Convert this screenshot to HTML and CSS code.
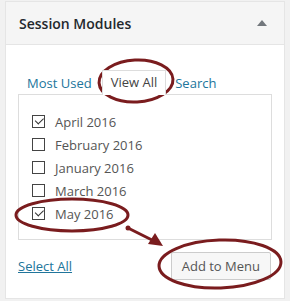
FILE: index.html
```html
<!DOCTYPE html>
<html lang="en">
<head>
    <meta charset="UTF-8">
    <title>Session Modules</title>
    <link rel="stylesheet" href="styles.css">
</head>
<body>
    <div class="postbox">
        <div class="postbox-header">
            <h2>Session Modules</h2>
            <span class="toggle-arrow"></span>
        </div>

        <div class="inside">
            <ul class="tabs">
                <li><a href="#">Most Used</a></li>
                <li class="active">View All</li>
                <li><a href="#">Search</a></li>
            </ul>

            <div class="tab-panel">
                <label class="item"><span class="check checked"></span>April 2016</label>
                <label class="item"><span class="check"></span>February 2016</label>
                <label class="item"><span class="check"></span>January 2016</label>
                <label class="item"><span class="check"></span>March 2016</label>
                <label class="item"><span class="check checked"></span>May 2016</label>
            </div>

            <div class="actions">
                <a href="#" class="select-all">Select All</a>
                <button class="btn">Add to Menu</button>
            </div>
        </div>
    </div>

    <!-- hand drawn annotations -->
    <svg class="marks" width="290" height="301" viewBox="0 0 290 301">
        <g fill="none" stroke="#7a1c1e" stroke-width="3">
            <ellipse cx="136" cy="81" rx="37" ry="21" transform="rotate(-3 136 81)"/>
            <ellipse cx="72" cy="215" rx="56" ry="16"/>
            <ellipse cx="220" cy="264" rx="61" ry="24" transform="rotate(-2 220 264)"/>
            <line x1="128" y1="228" x2="152" y2="240"/>
        </g>
        <circle cx="128" cy="228" r="2.5" fill="#7a1c1e"/>
        <polygon points="163,246 148,244 155,233" fill="#7a1c1e"/>
    </svg>
</body>
</html>
```

FILE: styles.css
```css
* {
    box-sizing: border-box;
    margin: 0;
    padding: 0;
}

body {
    background-color: #f1f1f1;
    font-family: 'Open Sans', 'Noto Sans', sans-serif;
    font-size: 13px;
    color: #555;
    position: relative;
    width: 290px;
    height: 301px;
    overflow: hidden;
}

.postbox {
    margin: 1px 0 0 5px;
    width: 280px;
    background-color: white;
    border: 1px solid #e5e5e5;
}

.postbox-header {
    display: flex;
    justify-content: space-between;
    align-items: center;
    height: 43px;
    padding: 0 17px 0 13px;
    background-color: #f5f5f5;
    border-bottom: 1px solid #e5e5e5;
}

.postbox-header h2 {
    font-size: 14px;
    font-weight: 600;
    color: #23282d;
}

.toggle-arrow {
    width: 0;
    height: 0;
    border-left: 5px solid transparent;
    border-right: 5px solid transparent;
    border-bottom: 6px solid #72777c;
}

.inside {
    padding: 25px 12px 18px 12px;
}

.tabs {
    list-style: none;
    display: flex;
    align-items: flex-end;
    padding-left: 9px;
    height: 25px;
}

.tabs li {
    padding: 0 8px 0 0;
    line-height: 23px;
}

.tabs a {
    color: #21759b;
    text-decoration: none;
}

.tabs li.active {
    height: 25px;
    margin: 0 9px 0 2px;
    padding: 0 8px;
    background-color: white;
    border: 1px solid #ddd;
    border-bottom: none;
    color: #444;
    position: relative;
    z-index: 1;
}

.tab-panel {
    margin-top: -1px;
    height: 146px;
    padding: 15px 13px 0 13px;
    border: 1px solid #ddd;
}

.item {
    display: flex;
    align-items: center;
    height: 23px;
    gap: 10px;
}

.check {
    width: 13px;
    height: 13px;
    border: 1px solid #444;
    position: relative;
}

.check.checked::after {
    content: '';
    position: absolute;
    left: 3px;
    top: 2px;
    width: 7px;
    height: 4px;
    border-left: 1.5px solid #333;
    border-bottom: 1.5px solid #333;
    transform: rotate(-45deg);
    transform-origin: 3px 3px;
}

.actions {
    display: flex;
    justify-content: space-between;
    align-items: center;
    margin-top: 12px;
}

.select-all {
    color: #21759b;
}

.btn {
    font-family: inherit;
    font-size: 13px;
    color: #555;
    background-color: #f7f7f7;
    border: 1px solid #ccc;
    border-radius: 2px;
    height: 28px;
    padding: 0 10px;
    margin-right: 1px;
}

.marks {
    position: absolute;
    top: 0;
    left: 0;
    pointer-events: none;
}
```
